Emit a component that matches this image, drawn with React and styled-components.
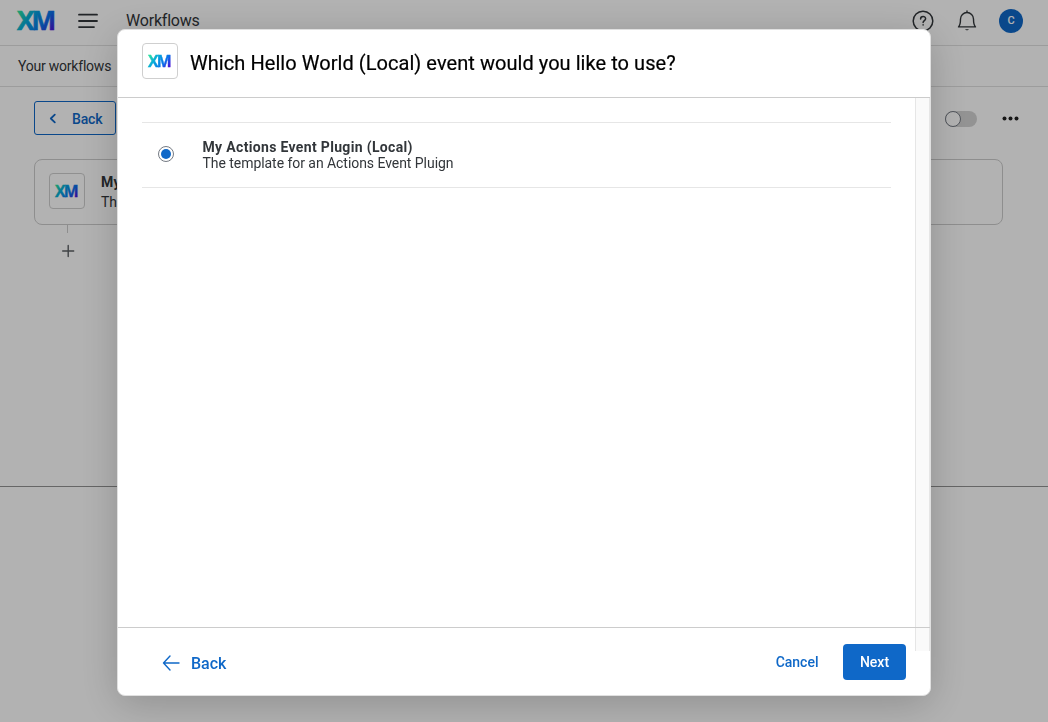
import React from "react";
import styled, { createGlobalStyle, css } from "styled-components";

const Global = createGlobalStyle`
  *, *::before, *::after { box-sizing: border-box; }
  body { margin: 0; background: #fff; color: #32363a; font-family: Roboto, "Noto Sans", sans-serif; font-size: 14px; overflow: hidden; }
  button { font: inherit; color: inherit; margin: 0; padding: 0; background: none; border: 0; cursor: pointer; }
  svg { display: block; flex: none; overflow: visible; }
`;

const Page = styled.div`
  display: flex;
  flex-direction: column;
  height: 722px;
`;
const Label = styled.span`
  white-space: nowrap;
  font-size: ${(p) => p.$size || 14}px;
  font-weight: ${(p) => p.$weight || 400};
  letter-spacing: ${(p) => p.$track || 0}px;
  line-height: ${(p) => p.$line || 16}px;
`;
const TopBar = styled.header`
  display: flex;
  align-items: center;
  height: 46px;
  padding: 0 25px 4px 17px;
  border-bottom: 1px solid #e0e0e0;
`;
const MenuButton = styled.button`
  margin: 0 28px 0 23px;
`;
const TopActions = styled.div`
  display: flex;
  align-items: center;
  margin-left: auto;
`;
const BellButton = styled.button`
  margin: 0 22px 0 23px;
`;
const Avatar = styled.div`
  display: grid;
  place-items: center;
  width: 24px;
  height: 24px;
  border-radius: 50%;
  background: #0f68c8;
  color: #fff;
`;
const SubNav = styled.nav`
  display: flex;
  align-items: center;
  height: 41px;
  padding: 0 18px;
  border-bottom: 1px solid #e0e0e0;
`;
const Canvas = styled.main`
  height: 400px;
  padding: 14px 29px 0 34px;
  border-bottom: 1px solid #929292;
`;
const Toolbar = styled.div`
  display: flex;
  align-items: center;
`;
const OutlineBack = styled.button`
  display: flex;
  align-items: center;
  gap: 15px;
  width: 82px;
  height: 34px;
  padding: 1px 0 0 14px;
  border: 1px solid #0f68c8;
  border-radius: 3px;
  color: #0f68c8;
`;
const Toggle = styled.div`
  width: 32px;
  height: 16px;
  margin: 1px 25px 0 auto;
  border-radius: 8px;
  background: #d3d3d3;
`;
const Knob = styled.div`
  width: 16px;
  height: 16px;
  border: 1px solid #757b84;
  border-radius: 50%;
  background: #fff;
`;
const EventCard = styled.section`
  display: flex;
  align-items: flex-start;
  gap: 16px;
  width: 969px;
  height: 66px;
  margin-top: 24px;
  padding: 13px 14px;
  border: 1px solid #ccc;
  border-radius: 8px;
`;
const LogoTile = styled.div`
  display: grid;
  place-items: center;
  flex: none;
  width: 36px;
  height: 36px;
  padding-right: 1px;
  border: 1px solid #cfcfcf;
  border-radius: 4px;
`;
const TextStack = styled.div`
  display: flex;
  flex-direction: column;
  gap: ${(p) => p.$gap || 0}px;
  padding-top: ${(p) => p.$top || 0}px;
`;
const Connector = styled.div`
  display: flex;
  flex-direction: column;
  align-items: center;
  gap: 12px;
  width: 67px;
  color: #5c6064;
  &::before { content: ""; width: 1px; height: 8px; background: #ccc; }
`;
const Overlay = styled.div`
  position: fixed;
  inset: 0;
  padding: 29px 117px 26px;
  background: rgba(0, 0, 0, 0.3);
`;
const Dialog = styled.div`
  display: flex;
  flex-direction: column;
  width: 814px;
  height: 667px;
  border: 1px solid #e0e0e0;
  border-radius: 8px;
  background: #fff;
  box-shadow: 0 8px 40px rgba(0, 0, 0, 0.2);
`;
const DialogHeader = styled.header`
  display: flex;
  align-items: center;
  gap: 12px;
  height: 68px;
  padding: 0 24px 4px;
  border-bottom: 1px solid #ccc;
  color: #000;
`;
const DialogTitle = styled.h1`
  margin: 0;
  padding-top: 3px;
  white-space: nowrap;
  font-size: 20px;
  font-weight: 400;
  letter-spacing: 0.055px;
  line-height: 24px;
  -webkit-text-stroke: 0.2px #000;
`;
const DialogBody = styled.div`
  display: flex;
  justify-content: space-between;
  height: 529px;
  padding-left: 24px;
`;
const Options = styled.div`
  width: 749px;
  padding-top: 24px;
`;
const Option = styled.label`
  display: flex;
  align-items: center;
  gap: 28.500px;
  height: 66px;
  padding: 0 16px;
  border: solid #e6e6e6;
  border-width: 1px 0;
`;
const Radio = styled.span`
  display: grid;
  place-items: center;
  width: 16px;
  height: 16px;
  margin-top: -2px;
  border: 1px solid #757b84;
  border-radius: 50%;
  &::after { content: ""; width: 10px; height: 10px; border-radius: 50%; background: #0f68c8; }
`;
const ScrollTrack = styled.div`
  width: 15px;
  height: 553px;
  border: solid #e6e6e6;
  border-width: 0 1px;
  background: #fafafa;
`;
const DialogFooter = styled.footer`
  display: flex;
  align-items: center;
  height: 69px;
  padding: 2px 24px 0 44px;
  border-top: 1px solid #ccc;
  color: #0f68c8;
  z-index: 1;
`;
const TextButton = styled.button`
  display: flex;
  align-items: center;
  gap: 11px;
  ${(p) => p.$end
    ? css`margin: 0 24.500px 0 auto;`
    : css`padding-top: 3px;`}
`;
const PrimaryButton = styled.button`
  width: 63px;
  height: 36px;
  border-radius: 4px;
  background: #0f68c8;
  color: #fff;
`;

function Logo({ id, width, height }) {
  return (
    <svg width={width} height={height} viewBox="0 0 38 20" preserveAspectRatio="none" aria-label="XM">
      <defs>
        <linearGradient id={id} gradientUnits="userSpaceOnUse" x1="4" y1="-2" x2="36" y2="22">
          <stop offset="0" stopColor="#2be0a0" />
          <stop offset="0.33" stopColor="#05a8dc" />
          <stop offset="0.7" stopColor="#0a70ea" />
          <stop offset="1" stopColor="#4a12d8" />
        </linearGradient>
      </defs>
      <text
        x="0"
        y="19.4"
        fill={`url(#${id})`}
        stroke={`url(#${id})`}
        strokeWidth="0.6"
        fontFamily="Open Sans, sans-serif"
        fontWeight="700"
        fontSize="27.5"
        letterSpacing="-3.2"
        transform="scale(0.95 1)"
      >
        XM
      </text>
    </svg>
  );
}

const stroke = { fill: "none", stroke: "currentColor", strokeLinecap: "round", strokeLinejoin: "round" };

export default function App() {
  return (
    <>
      <Global />
      <Page>
        <TopBar>
          <Logo id="brand" width={38} height={20} />
          <MenuButton aria-label="Menu">
            <svg width="20" height="16" {...stroke} strokeWidth="1.8"><path d="M1 1.700h18M1 8h18M1 14.100h15" /></svg>
          </MenuButton>
          <Label $size={16} $track={-0.2}>Workflows</Label>
          <TopActions>
            <svg width="22" height="22" {...stroke} strokeWidth="1.5">
              <circle cx="11" cy="11" r="9.800" />
              <path d="M8.600 8.900c0-3.200 5-3.200 5-.2 0 1.900-2.500 1.900-2.500 3.800M11.100 14.800v.2" />
            </svg>
            <BellButton aria-label="Notifications">
              <svg width="20" height="22" {...stroke} strokeWidth="1.4">
                <path d="M1.500 16.900c2-2 2-4 2-7.900a6.500 6.500 0 0 1 13 0c0 3.900 0 5.900 2 7.900zM10 2.300V1" />
                <path d="M8.200 19.200h3.600c-.5 1.300-3.100 1.300-3.600 0z" fill="currentColor" stroke="none" />
              </svg>
            </BellButton>
            <Avatar><Label $size={11} $weight={500}>C</Label></Avatar>
          </TopActions>
        </TopBar>
        <SubNav><Label $track={-0.22}>Your workflows</Label></SubNav>
        <Canvas>
          <Toolbar>
            <OutlineBack>
              <svg width="8" height="10" {...stroke} strokeWidth="1.8"><path d="M5.800 .7L1.800 4.500l4 3.800" /></svg>
              <Label $weight={500} $track={-0.15}>Back</Label>
            </OutlineBack>
            <Toggle><Knob /></Toggle>
            <svg width="17" height="6" fill="#222"><circle cx="2.500" cy="3.500" r="2" /><circle cx="8.500" cy="3.500" r="2" /><circle cx="14.500" cy="3.500" r="2" /></svg>
          </Toolbar>
          <EventCard>
            <LogoTile><Logo id="card" width={23} height={12} /></LogoTile>
            <TextStack $gap={4} $top={1}>
              <Label $weight={700} $track={0.33}>My Actions Event Plugin (Local)</Label>
              <Label $track={-0.04}>The template for an Actions Event Pluign</Label>
            </TextStack>
          </EventCard>
          <Connector>
            <svg width="12" height="12" {...stroke} strokeWidth="1.4"><path d="M6.200 .5v11M.7 6h11" /></svg>
          </Connector>
        </Canvas>
      </Page>
      <Overlay>
        <Dialog role="dialog">
          <DialogHeader>
            <LogoTile><Logo id="dialog" width={23} height={12} /></LogoTile>
            <DialogTitle>Which Hello World (Local) event would you like to use?</DialogTitle>
          </DialogHeader>
          <DialogBody>
            <Options>
              <Option>
                <Radio />
                <TextStack>
                  <Label $weight={700} $track={0.33}>My Actions Event Plugin (Local)</Label>
                  <Label $track={-0.05}>The template for an Actions Event Pluign</Label>
                </TextStack>
              </Option>
            </Options>
            <ScrollTrack />
          </DialogBody>
          <DialogFooter>
            <TextButton>
              <svg width="18" height="16" {...stroke} strokeWidth="1.4"><path d="M17 7H1.500M8 0L1.500 7 8 14" /></svg>
              <Label $size={16} $weight={500} $line={20}>Back</Label>
            </TextButton>
            <TextButton $end><Label $weight={500}>Cancel</Label></TextButton>
            <PrimaryButton><Label $weight={500}>Next</Label></PrimaryButton>
          </DialogFooter>
        </Dialog>
      </Overlay>
    </>
  );
}
